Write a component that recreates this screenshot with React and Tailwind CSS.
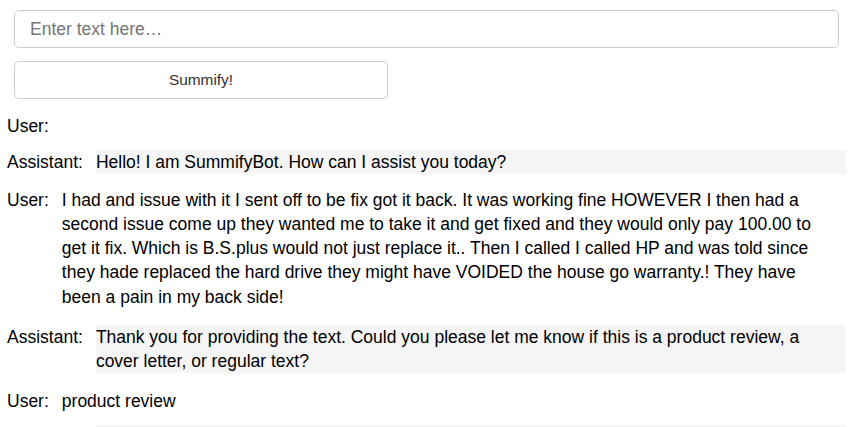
import { useState } from "react";

const messages = [
  { role: "User", text: "", mt: "mt-[14.5px]" },
  { role: "Assistant", text: "Hello! I am SummifyBot. How can I assist you today?", mt: "mt-[12px]" },
  {
    role: "User",
    text: "I had and issue with it I sent off to be fix got it back. It was working fine HOWEVER I then had a second issue come up they wanted me to take it and get fixed and they would only pay 100.00 to get it fix. Which is B.S.plus would not just replace it.. Then I called I called HP and was told since they hade replaced the hard drive they might have VOIDED the house go warranty.! They have been a pain in my back side!",
    mt: "mt-[14px]",
  },
  {
    role: "Assistant",
    text: "Thank you for providing the text. Could you please let me know if this is a product review, a cover letter, or regular text?",
    mt: "mt-[16px]",
  },
  { role: "User", text: "product review", mt: "mt-[15.5px]" },
  { role: "Assistant", text: "", mt: "mt-[12px]" },
];

function Row({ role, text, mt }) {
  const isBot = role === "Assistant";
  return (
    <div className={`flex pl-[7px] pr-[11px] ${mt}`}>
      <span className="mr-[13px] shrink-0">{role}:</span>
      <div className={`flex-1 min-h-[24px] ${isBot ? "bg-[#f5f5f5]" : "pr-[16px]"}`}>{text}</div>
    </div>
  );
}

export default function App() {
  const [value, setValue] = useState("");

  return (
    <div className="min-h-screen bg-white text-black font-['Liberation_Sans',Arial,sans-serif] text-[17.5px] leading-[1.383]">
      {/* FORM */}
      <div className="pl-[14px] pt-[10px]">
        <input
          value={value}
          onChange={(e) => setValue(e.target.value)}
          placeholder="Enter text here…"
          className="block w-[825px] h-[38px] px-[15px] border border-[#cccccc] rounded-[5px] text-[17.5px] placeholder:text-[#757575] outline-none"
        />
        <button className="block mt-[13px] w-[374px] h-[38px] border border-[#cccccc] rounded-[5px] bg-white text-[15.4px] text-[#333333]">
          Summify!
        </button>
      </div>

      {/* CHAT */}
      <div>
        {messages.map((m, i) => (
          <Row key={i} {...m} />
        ))}
      </div>
    </div>
  );
}
